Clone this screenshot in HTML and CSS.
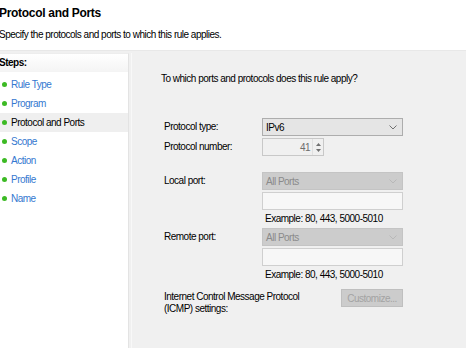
FILE: index.html
```html
<!DOCTYPE html>
<html lang="en">
<head>
    <meta charset="UTF-8">
    <title>Protocol and Ports</title>
    <link rel="stylesheet" href="styles.css">
</head>
<body>
    <div class="header">
        <h1>Protocol and Ports</h1>
        <div class="subtitle">Specify the protocols and ports to which this rule applies.</div>
    </div>

    <div class="main">
        <div class="steps">
            <div class="steps-title">Steps:</div>
            <ul class="step-list">
                <li class="step"><span class="dot"></span>Rule Type</li>
                <li class="step"><span class="dot"></span>Program</li>
                <li class="step current"><span class="dot"></span>Protocol and Ports</li>
                <li class="step"><span class="dot"></span>Scope</li>
                <li class="step"><span class="dot"></span>Action</li>
                <li class="step"><span class="dot"></span>Profile</li>
                <li class="step"><span class="dot"></span>Name</li>
            </ul>
        </div>

        <div class="page">
            <p class="question">To which ports and protocols does this rule apply?</p>

            <div class="form">
                <div class="row">
                    <label>Protocol type:</label>
                    <div class="select">
                        <span>IPv6</span>
                        <svg width="8" height="5" viewBox="0 0 8 5"><path d="M0.5 0.5 L4 4 L7.5 0.5" fill="none" stroke="#707070"/></svg>
                    </div>
                </div>
                <div class="row">
                    <label>Protocol number:</label>
                    <div class="spin">
                        <span class="spin-value">41</span>
                        <span class="spin-buttons">
                            <svg width="5" height="3" viewBox="0 0 5 3"><path d="M2.5 0 L5 3 L0 3 Z" fill="#707070"/></svg>
                            <svg width="5" height="3" viewBox="0 0 5 3"><path d="M0 0 L5 0 L2.5 3 Z" fill="#707070"/></svg>
                        </span>
                    </div>
                </div>

                <div class="row port-row">
                    <label>Local port:</label>
                    <div class="port-fields">
                        <div class="select disabled">
                            <span>All Ports</span>
                            <svg width="8" height="5" viewBox="0 0 8 5"><path d="M0.5 0.5 L4 4 L7.5 0.5" fill="none" stroke="#b8b8b8"/></svg>
                        </div>
                        <div class="textbox"></div>
                        <div class="example">Example: 80, 443, 5000-5010</div>
                    </div>
                </div>

                <div class="row port-row">
                    <label>Remote port:</label>
                    <div class="port-fields">
                        <div class="select disabled">
                            <span>All Ports</span>
                            <svg width="8" height="5" viewBox="0 0 8 5"><path d="M0.5 0.5 L4 4 L7.5 0.5" fill="none" stroke="#b8b8b8"/></svg>
                        </div>
                        <div class="textbox"></div>
                        <div class="example">Example: 80, 443, 5000-5010</div>
                    </div>
                </div>

                <div class="row icmp-row">
                    <label>Internet Control Message Protocol<br>(ICMP) settings:</label>
                    <div class="button-wrap">
                        <button class="button" disabled>Customize...</button>
                    </div>
                </div>
            </div>
        </div>
    </div>
</body>
</html>
```

FILE: styles.css
```css
* {
    margin: 0;
    padding: 0;
    box-sizing: border-box;
}

body {
    font-family: 'Liberation Sans', Arial, sans-serif;
    font-size: 10px;
    letter-spacing: -0.5px;
    color: #000;
    background: #f0f0f0;
    width: 466px;
    height: 348px;
    overflow: hidden;
}

.header {
    background: white;
    height: 51px;
    padding: 6px 0 0 0;
    border-bottom: 1px solid #e8e8e8;
}

h1 {
    font-size: 12px;
    font-weight: bold;
    letter-spacing: -0.3px;
    line-height: 14px;
    margin-left: -1px;
}

.subtitle {
    margin-top: 9px;
    margin-left: -1px;
    line-height: 12px;
}

.main {
    display: flex;
    height: 297px;
    padding-top: 2px;
}

.steps {
    width: 129px;
    background: white;
    border-right: 1px solid #e3e3e3;
    border-top: 1px solid #ededed;
}

.steps-title {
    font-weight: bold;
    height: 18px;
    line-height: 17px;
    background: linear-gradient(to bottom, #ffffff, #f4f4f4);
    margin-left: -1px;
}

.step-list {
    list-style: none;
    padding-top: 3px;
}

.step {
    display: flex;
    align-items: center;
    height: 19px;
    color: #3478d0;
    padding-left: 2px;
}

.step.current {
    background: #efefef;
    color: #000;
}

.dot {
    width: 5px;
    height: 5px;
    border-radius: 50%;
    background: #3cba24;
    margin-right: 4px;
}

.page {
    flex: 1;
    margin-left: 2px;
    border-left: 1px solid #f8f8f8;
    padding: 20px 0 0 29px;
}

.question {
    line-height: 12px;
}

.form {
    margin-top: 33px;
    padding-left: 3px;
}

.row {
    display: flex;
    margin-bottom: 2px;
}

.row label {
    width: 98px;
    line-height: 18px;
}

.select {
    width: 141px;
    height: 18px;
    border: 1px solid #adadad;
    background: #e5e5e5;
    display: flex;
    align-items: center;
    justify-content: space-between;
    padding: 0 5px 0 3px;
}

.select.disabled {
    background: #cccccc;
    border-color: #c4c4c4;
    color: #8a8a8a;
}

.spin {
    width: 62px;
    height: 18px;
    border: 1px solid #c8c8c8;
    background: #f0f0f0;
    display: flex;
    align-items: center;
    justify-content: flex-end;
    color: #6d6d6d;
}

.spin-value {
    margin-right: 2px;
}

.spin-buttons {
    display: flex;
    flex-direction: column;
    gap: 3px;
    width: 11px;
    height: 16px;
    align-items: center;
    justify-content: center;
    border-left: 1px solid #e0e0e0;
}

.port-row {
    margin-top: 16px;
}

.port-row + .port-row {
    margin-top: -1px;
}

.port-fields {
    display: flex;
    flex-direction: column;
}

.textbox {
    width: 141px;
    height: 18px;
    margin-top: 2px;
    border: 1px solid #cfcfcf;
    background: #f7f7f7;
}

.example {
    line-height: 17px;
    padding-left: 3px;
}

.icmp-row {
    margin-top: 7px;
}

.icmp-row label {
    width: 177px;
    line-height: 12px;
    padding-top: 1px;
}

.button-wrap {
    padding-top: 0;
}

.button {
    width: 62px;
    height: 18px;
    margin-top: -1px;
    font-family: inherit;
    font-size: 10px;
    letter-spacing: -0.5px;
    color: #a3a3a3;
    background: #cccccc;
    border: 1px solid #bfbfbf;
}
```
